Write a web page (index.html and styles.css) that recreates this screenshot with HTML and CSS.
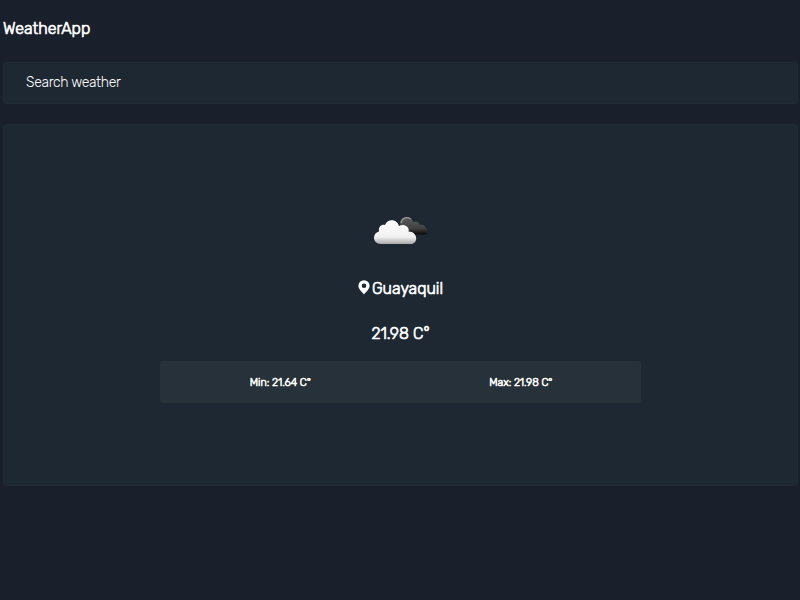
FILE: index.html
```html
<!DOCTYPE html>
<html lang="en">
<head>
<meta charset="utf-8">
<title>WeatherApp</title>
<link rel="stylesheet" href="styles.css">
</head>
<body>
<main class="app">
  <h1 class="brand">WeatherApp</h1>
  <div class="search"><span class="search-label">Search weather</span></div>
  <section class="weather">
    <svg class="clouds" width="56" height="30" viewBox="0 0 56 30" aria-hidden="true">
      <defs>
        <linearGradient id="dark" x1="0" y1="0" x2="0" y2="1"><stop offset="0" stop-color="#5c5c5c"/><stop offset=".65" stop-color="#414141"/><stop offset="1" stop-color="#080808"/></linearGradient>
        <linearGradient id="light" x1="0" y1="0" x2="0" y2="1"><stop offset="0" stop-color="#fff"/><stop offset=".7" stop-color="#f1f1f1"/><stop offset="1" stop-color="#a9a9a9"/></linearGradient>
      </defs>
      <path fill="url(#dark)" d="M27 11C26 5 29 1 33.500 1C37 1 39.500 3 40.500 6C43 4.500 46 6 47 9C50 8 52.500 10 52.500 12C56 13 55 18.500 51 18.500H34Z"/>
      <path fill="none" stroke="#999" stroke-width="1.300" d="M28 7C29 2 34 0 38 3"/>
      <path fill="url(#light)" d="M8 28C-1 28-1 17 6 15.500C5 10 9.500 8 12 9C14 2.500 24 2.500 26 10C31 7 37 11 35.500 15.500C45 15.500 46 28 37 28Z"/>
    </svg>
    <h2 class="city"><svg class="pin" width="12" height="15" viewBox="0 0 12 15" aria-hidden="true"><path fill="#fff" fill-rule="evenodd" d="M6 .2A5.600 5.600 0 0 0 .4 5.800C.4 9 3.500 11.500 6 14.500C8.500 11.500 11.600 9 11.600 5.800A5.600 5.600 0 0 0 6 .2ZM6 3.400A2.300 2.300 0 1 1 6 8A2.300 2.300 0 1 1 6 3.400Z"/></svg><span class="city-name">Guayaquil</span></h2>
    <p class="temp">21.98 C°</p>
    <div class="range">
      <span class="min">Min: 21.64 C°</span>
      <span class="max">Max: 21.98 C°</span>
    </div>
  </section>
</main>
</body>
</html>
```
FILE: styles.css
```css
* { box-sizing: border-box; }
body {
  margin: 0;
  min-height: 100vh;
  background: #1a202b;
  color: #fff;
  font-family: Rubik, Roboto, sans-serif;
}
.app { padding: 19px 2px 0 3px; }
.brand {
  margin: 0 0 23px;
  font-size: 16px;
  line-height: 20px;
  font-weight: 300;
  -webkit-text-stroke: 0.7px #fff;
}
.search {
  height: 42px;
  padding: 0 22px;
  border: 1px solid #212b34;
  border-radius: 3px;
  background: #1e2832;
  display: flex;
  align-items: center;
}
.search-label {
  font-size: 14px;
  font-weight: 300;
  line-height: 20px;
  letter-spacing: -0.32px;
  color: #fff;
}
.weather {
  height: 362px;
  margin-top: 20px;
  padding-top: 91px;
  border: 1px solid #212b34;
  border-radius: 4px;
  background: #1e2832;
  display: flex;
  flex-direction: column;
  align-items: center;
}
.clouds { display: block; margin-left: 1px; }
.city {
  display: flex;
  align-items: center;
  gap: 2px;
  margin: 33px 0 0;
  font-size: 16px;
  line-height: 20px;
  font-weight: 300;
}
.city-name, .temp { -webkit-text-stroke: 0.7px #fff; }
.pin { margin-bottom: 4px; }
.temp {
  margin: 25px 0 0;
  font-size: 16px;
  line-height: 20px;
  font-weight: 300;
}
.range {
  width: 481px;
  height: 42px;
  margin-top: 17px;
  border-radius: 3px;
  background: #273139;
  display: grid;
  grid-template-columns: 1fr 1fr;
  align-items: center;
  text-align: center;
  font-size: 10.72px;
  font-weight: 300;
  letter-spacing: -0.05px;
  -webkit-text-stroke: 0.6px #fff;
}
```
